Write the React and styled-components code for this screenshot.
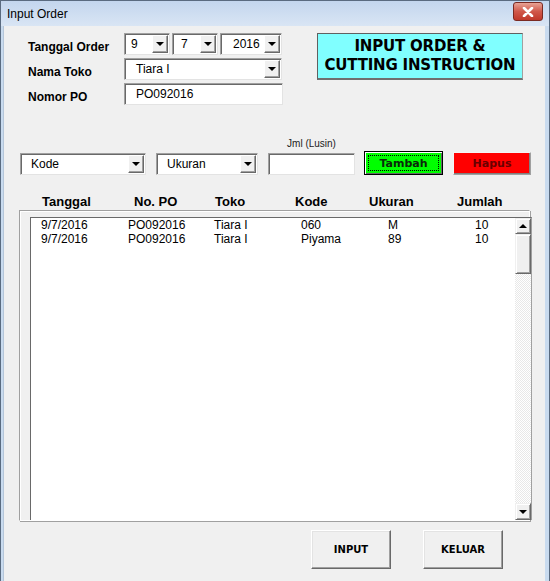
import React from "react";
import styled, { createGlobalStyle } from "styled-components";

const GlobalStyle = createGlobalStyle`
  html, body {
    margin: 0;
    padding: 0;
    background: #ffffff;
  }
  body {
    font-family: "Liberation Sans", Arial, sans-serif;
  }
`;

const rows = [
  ["9/7/2016", "PO092016", "Tiara I", "060", "M", "10"],
  ["9/7/2016", "PO092016", "Tiara I", "Piyama", "89", "10"],
];

const headers = [
  { label: "Tanggal", w: 92 },
  { label: "No. PO", w: 81 },
  { label: "Toko", w: 80 },
  { label: "Kode", w: 74 },
  { label: "Ukuran", w: 88 },
  { label: "Jumlah", w: 60 },
];

const colWidths = [87, 86, 87, 87, 87, 40];

const Window = styled.div`
  width: 550px;
  height: 581px;
  box-sizing: border-box;
  border: 1px solid #5a6b80;
  border-bottom: none;
  background: #c9dbef;
  display: flex;
  flex-direction: column;
  overflow: hidden;
`;

const TitleBar = styled.div`
  height: 25px;
  display: flex;
  align-items: center;
  justify-content: space-between;
  padding: 0 6px 0 6px;
  background: linear-gradient(#c3d6ee, #d9e5f4);
  font-size: 12px;
  color: #000;
`;

const CloseBtn = styled.div`
  width: 28px;
  height: 17px;
  margin-top: -4px;
  border: 1px solid #7a2a22;
  border-radius: 3px;
  background: linear-gradient(#e8a395, #d0584a 50%, #c0392b);
  display: flex;
  align-items: center;
  justify-content: center;
`;

const Body = styled.div`
  flex: 1;
  margin: 0 4px 0 2px;
  background: #f0f0f0;
  border-left: 1px solid #b5c6d9;
  display: flex;
  flex-direction: column;
`;

const TopRow = styled.div`
  display: flex;
  align-items: flex-start;
  padding: 7px 0 0 24px;
`;

const FormGrid = styled.div`
  display: grid;
  grid-template-columns: 96px auto;
  row-gap: 3px;
  align-items: center;
`;

const Label = styled.div`
  font-size: 12px;
  font-weight: bold;
  padding-top: 6px;
`;

const DateRow = styled.div`
  display: flex;
  gap: 2px;
`;

const Sunken = styled.div`
  box-sizing: border-box;
  width: ${(p) => p.w}px;
  height: 22px;
  background: #fff;
  border-top: 1px solid #a0a0a0;
  border-left: 1px solid #a0a0a0;
  border-right: 1px solid #e3e3e3;
  border-bottom: 1px solid #e3e3e3;
  box-shadow: inset 1px 1px 0 #696969;
  display: flex;
  align-items: center;
  font-size: 12px;
`;

const FieldText = styled.span`
  flex: 1;
  padding-left: ${(p) => p.pad || 9}px;
  white-space: nowrap;
`;

const DropBtn = styled.div`
  box-sizing: border-box;
  width: 16px;
  height: 18px;
  margin-right: 1px;
  background: #f0f0f0;
  border-top: 1px solid #fff;
  border-left: 1px solid #fff;
  border-right: 1px solid #696969;
  border-bottom: 1px solid #696969;
  box-shadow: inset -1px -1px 0 #a0a0a0;
  display: flex;
  align-items: center;
  justify-content: center;
`;

const Arrow = styled.div`
  width: 0;
  height: 0;
  border-left: 4px solid transparent;
  border-right: 4px solid transparent;
  ${(p) => (p.up ? "border-bottom" : "border-top")}: 4px solid #000;
`;

const TitleBox = styled.div`
  margin-left: 34px;
  width: 206px;
  height: 47px;
  box-sizing: border-box;
  background: #80ffff;
  border: 1px solid #606060;
  border-right-color: #a0a0a0;
  border-bottom: 2px solid #707070;
  font-family: "DejaVu Sans", "Liberation Sans", sans-serif;
  font-weight: bold;
  font-size: 15px;
  line-height: 19px;
  text-align: center;
  padding-top: 3px;
  color: #000;
  letter-spacing: -0.2px;
`;

const ControlRow = styled.div`
  display: flex;
  align-items: flex-end;
  padding: 33px 0 0 16px;
`;

const Stack = styled.div`
  display: flex;
  flex-direction: column;
  align-items: center;
  margin-left: ${(p) => p.ml || 0}px;
`;

const SmallLabel = styled.div`
  font-size: 10px;
  color: #222;
  margin-bottom: 4px;
`;

const ColorBtn = styled.div`
  box-sizing: border-box;
  width: ${(p) => p.w}px;
  height: ${(p) => p.h}px;
  margin-left: ${(p) => p.ml}px;
  background: ${(p) => p.bg};
  border: 1px solid ${(p) => (p.focus ? "#000" : "#f4f4f4")};
  border-right-color: ${(p) => (p.focus ? "#000" : "#a0a0a0")};
  border-bottom-color: ${(p) => (p.focus ? "#000" : "#a0a0a0")};
  box-shadow: ${(p) =>
    p.focus
      ? "inset 1px 1px 0 #fff, inset -1px -1px 0 #696969"
      : "inset -1px -1px 0 #808080"};
  display: flex;
  align-items: center;
  justify-content: center;
  position: relative;
  &::after {
    content: "";
    display: ${(p) => (p.focus ? "block" : "none")};
    position: absolute;
    inset: 3px;
    border: 1px dotted #000;
  }
`;

const BtnText = styled.span`
  font-family: "DejaVu Sans", "Liberation Sans", sans-serif;
  font-size: ${(p) => p.size || 11}px;
  font-weight: 700;
  color: ${(p) => p.fg};
  line-height: 1;
`;

const HeaderRow = styled.div`
  display: flex;
  padding: 19px 0 0 38px;
  height: 16px;
`;

const HeaderCell = styled.div`
  width: ${(p) => p.w}px;
  font-size: 13px;
  font-weight: bold;
`;

const ListFrame = styled.div`
  margin: 0 15px 0 15px;
  height: 311px;
  box-sizing: border-box;
  border-top: 1px solid #a0a0a0;
  border-left: 1px solid #a0a0a0;
  border-right: 1px solid #fff;
  border-bottom: 1px solid #fff;
  box-shadow: inset 1px 1px 0 #fff, 1px 1px 0 #a0a0a0;
  padding: 6px 1px 0 10px;
  display: flex;
`;

const ListBox = styled.div`
  flex: 1;
  display: flex;
  background: #fff;
  border-top: 1px solid #696969;
  border-left: 1px solid #696969;
  border-right: 1px solid #a0a0a0;
`;

const ListBody = styled.div`
  flex: 1;
  padding: 1px 0 0 10px;
`;

const DataRow = styled.div`
  display: flex;
  height: 13.5px;
  font-size: 12px;
  line-height: 13px;
`;

const DataCell = styled.div`
  width: ${(p) => p.w}px;
  white-space: nowrap;
`;

const ScrollBar = styled.div`
  width: 16px;
  display: flex;
  flex-direction: column;
  background-color: #f0f0f0;
  background-image: repeating-conic-gradient(#e8e8e8 0 25%, #ffffff 0 50%);
  background-size: 2px 2px;
`;

const ScrollPart = styled.div`
  box-sizing: border-box;
  height: ${(p) => p.h}px;
  background: #f0f0f0;
  border-top: 1px solid #f0f0f0;
  border-left: 1px solid #f0f0f0;
  border-right: 1px solid #696969;
  border-bottom: 1px solid #696969;
  box-shadow: inset 1px 1px 0 #fff, inset -1px -1px 0 #a0a0a0;
  display: flex;
  align-items: center;
  justify-content: center;
`;

const Spacer = styled.div`
  flex: 1;
`;

const BottomRow = styled.div`
  display: flex;
  justify-content: flex-end;
  gap: 32px;
  padding: 9px 42px 0 0;
`;

const BigBtn = styled.div`
  box-sizing: border-box;
  width: 80px;
  height: 39px;
  background: #f0f0f0;
  border-top: 1px solid #fff;
  border-left: 1px solid #fff;
  border-right: 1px solid #696969;
  border-bottom: 1px solid #696969;
  box-shadow: inset -1px -1px 0 #a0a0a0, inset 1px 1px 0 #e3e3e3;
  display: flex;
  align-items: center;
  justify-content: center;
`;

const Combo = ({ w, text, pad }) => (
  <Sunken w={w}>
    <FieldText pad={pad}>{text}</FieldText>
    <DropBtn>
      <Arrow />
    </DropBtn>
  </Sunken>
);

export default function App() {
  return (
    <>
      <GlobalStyle />
      <Window>
        <TitleBar>
          <span>Input Order</span>
          <CloseBtn>
            <svg width="12" height="10" viewBox="0 0 12 10">
              <path
                d="M2 1 L10 9 M10 1 L2 9"
                stroke="#fff"
                strokeWidth="2.6"
                strokeLinecap="round"
              />
            </svg>
          </CloseBtn>
        </TitleBar>
        <Body>
          <TopRow>
            <FormGrid>
              <Label>Tanggal Order</Label>
              <DateRow>
                <Combo w={46} text="9" pad={6} />
                <Combo w={46} text="7" pad={8} />
                <Combo w={62} text="2016" pad={12} />
              </DateRow>
              <Label>Nama Toko</Label>
              <Combo w={158} text="Tiara I" pad={11} />
              <Label>Nomor PO</Label>
              <Sunken w={159}>
                <FieldText pad={11}>PO092016</FieldText>
              </Sunken>
            </FormGrid>
            <TitleBox>
              INPUT ORDER &amp;
              <br />
              CUTTING INSTRUCTION
            </TitleBox>
          </TopRow>

          <ControlRow>
            <Combo w={126} text="Kode" pad={10} />
            <Stack ml={10}>
              <Combo w={102} text="Ukuran" pad={10} />
            </Stack>
            <Stack ml={10}>
              <SmallLabel>Jml (Lusin)</SmallLabel>
              <Sunken w={87} />
            </Stack>
            <ColorBtn w={79} h={24} ml={9} bg="#00ff00" focus>
              <BtnText fg="#0a2a0a">Tambah</BtnText>
            </ColorBtn>
            <ColorBtn w={78} h={23} ml={10} bg="#ff0000">
              <BtnText fg="#6a0000">Hapus</BtnText>
            </ColorBtn>
          </ControlRow>

          <HeaderRow>
            {headers.map((h) => (
              <HeaderCell key={h.label} w={h.w}>
                {h.label}
              </HeaderCell>
            ))}
          </HeaderRow>

          <ListFrame>
            <ListBox>
              <ListBody>
                {rows.map((r, i) => (
                  <DataRow key={i}>
                    {r.map((c, j) => (
                      <DataCell key={j} w={colWidths[j]}>
                        {c}
                      </DataCell>
                    ))}
                  </DataRow>
                ))}
              </ListBody>
              <ScrollBar>
                <ScrollPart h={16}>
                  <Arrow up />
                </ScrollPart>
                <ScrollPart h={40} />
                <Spacer />
                <ScrollPart h={17}>
                  <Arrow />
                </ScrollPart>
              </ScrollBar>
            </ListBox>
          </ListFrame>

          <BottomRow>
            <BigBtn>
              <BtnText fg="#000" size={10}>INPUT</BtnText>
            </BigBtn>
            <BigBtn>
              <BtnText fg="#000" size={10}>KELUAR</BtnText>
            </BigBtn>
          </BottomRow>
        </Body>
      </Window>
    </>
  );
}
